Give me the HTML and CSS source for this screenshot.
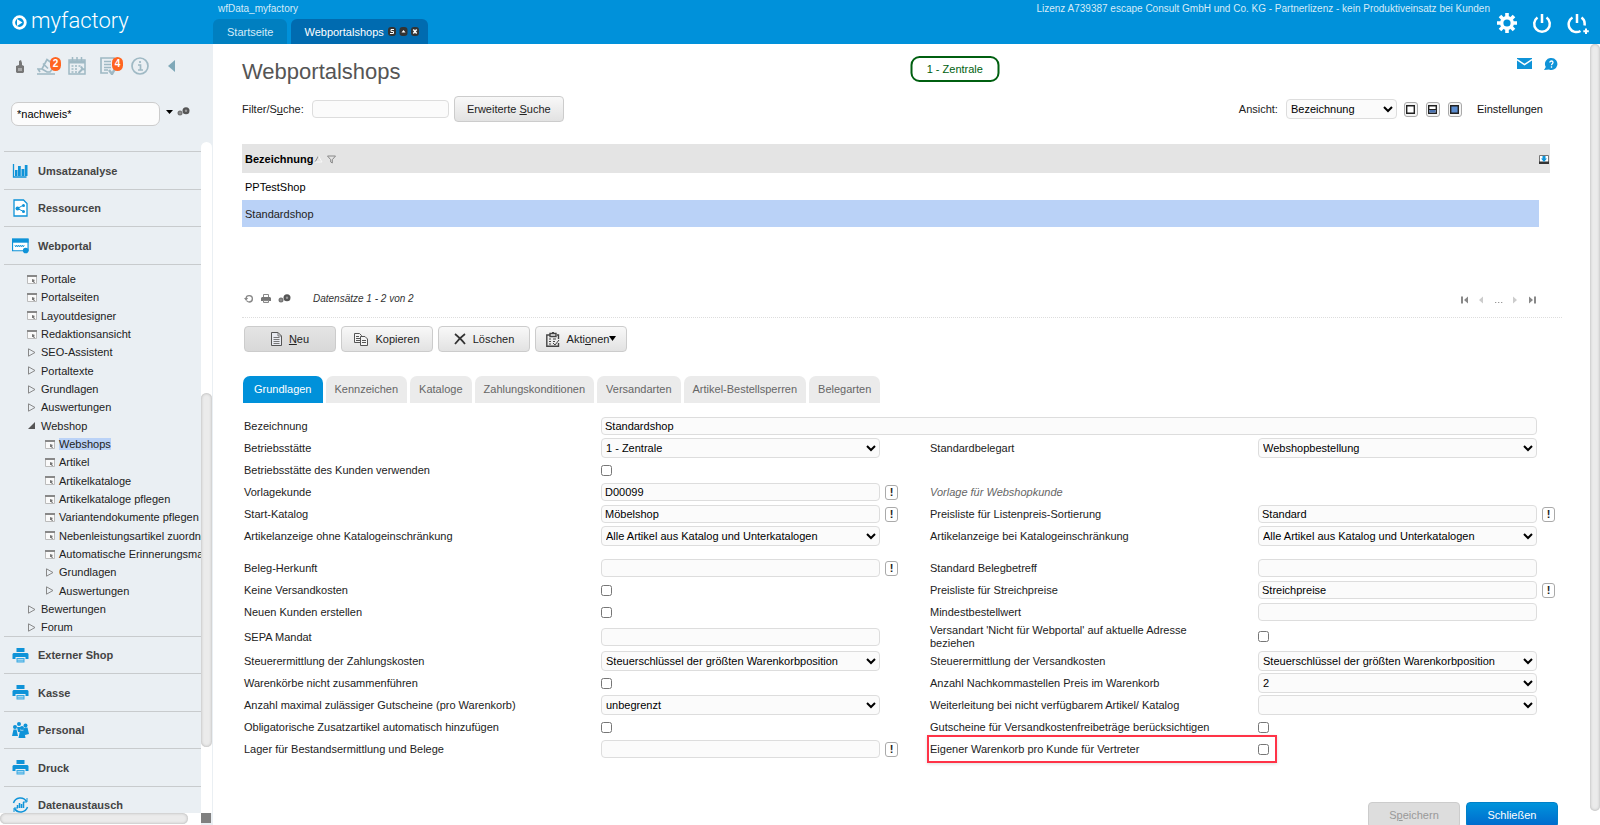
FILE: index.html
```html
<!DOCTYPE html>
<html lang="de">
<head>
	<meta charset="utf-8">
	<title>myfactory - Webportalshops</title>
	<link rel="stylesheet" href="styles.css">
</head>
<body>

<!-- icon symbols -->
<svg class="defs" width="0" height="0">
	<symbol id="page" viewBox="0 0 10 9"><path d="M.5 1.5h9v7h-9z" fill="#fafafa" stroke="#bbb"/><path d="M0 0h10v2H0z" fill="#888"/><path d="M5 4l3 1-1 1 1 2-1 0-1-1-1 0z" fill="#777"/></symbol>
	<symbol id="closed" viewBox="0 0 10 9"><path d="M1.500 .8v7.400L8 4.500z" fill="none" stroke="#888"/></symbol>
	<symbol id="opened" viewBox="0 0 10 9"><path d="M8 1v7H1z" fill="#555"/></symbol>
	<symbol id="printer" viewBox="0 0 16 15"><path d="M4 0h8v4H4zM1 5h14l1 1v5h-3V9H3v2H0V6z" fill="#0f93d8"/><path d="M4 10h8v4.500H4z" fill="#3aa9e2"/><path d="M5 11.500h6M5 13h6" stroke="#d5ecf8" stroke-width=".7"/></symbol>
	<symbol id="cogs" viewBox="0 0 13 9"><circle cx="3" cy="6" r="2.500" fill="#777"/><circle cx="9" cy="3.700" r="3.500" fill="#555"/><circle cx="3" cy="6" r=".8" fill="#aaa"/><circle cx="9" cy="3.700" r="1.200" fill="#999"/></symbol>
</svg>

<header class="top">
	<a class="logo" href="#">
		<svg width="15" height="15" viewBox="0 0 15 15"><circle cx="7.500" cy="7.500" r="5.800" fill="none" stroke="#fff" stroke-width="2.800"/><path d="M5 4v7l5.500-3.500z" fill="#fff"/></svg>
		<span>myfactory</span>
	</a>
	<div class="top-mid">
		<div class="database">wfData_myfactory</div>
		<nav class="top-tabs">
			<a href="#">Startseite</a>
			<a href="#" class="active">Webportalshops
				<svg width="31" height="9" viewBox="0 0 31 9"><rect width="8" height="9" rx="3" fill="#333"/><rect x="11.500" width="8" height="9" rx="3" fill="#333"/><rect x="23" width="8" height="9" rx="3" fill="#333"/><path d="M6 2.500H3v2h2.500v2H2" fill="none" stroke="#fff"/><path d="M13.500 5.500h4l-2-2.500z" fill="#fff"/><path d="M25.300 2.500l3.400 4m0-4l-3.400 4" stroke="#fff" stroke-width="1.500"/></svg>
			</a>
		</nav>
	</div>
	<div class="license">Lizenz A739387 escape Consult GmbH und Co. KG - Partnerlizenz - kein Produktiveinsatz bei Kunden</div>
	<div class="top-icons">
		<svg width="20" height="20" viewBox="0 0 20 20" fill="none" stroke="#fff"><circle cx="10" cy="10" r="5.300" stroke-width="3.400"/><path d="M10 0v4M10 16v4M0 10h4M16 10h4M3 3l2.700 2.700M14.300 14.300L17 17M17 3l-2.700 2.700M5.700 14.300L3 17" stroke-width="3.600"/></svg>
		<svg width="20" height="21" viewBox="0 0 20 21" fill="none" stroke="#fff" stroke-width="2.500"><path d="M5.500 4.500a7.800 7.800 0 1 0 9 0M10 1v9"/></svg>
		<svg width="22" height="21" viewBox="0 0 22 21" fill="none" stroke="#fff" stroke-width="2.500"><path d="M5.500 4.500a7.800 7.800 0 1 0 8 13.500M14.500 4.500c2.500 1.800 3.500 5 3 8M10 1v9"/><path d="M19 15.500v5.500M16.300 18.200h5.500" stroke-width="2"/></svg>
	</div>
</header>

<div class="page">
	<aside class="side">
		<div class="side-icons">
			<svg class="i1" width="10" height="13" viewBox="0 0 10 13"><path d="M1 6l3-1V1l2-1 1 3v2l2 1v6l-1 1H2l-1-1z" fill="#777"/><path d="M3 8h4v3H3z" fill="#aaa"/></svg>
			<svg class="i2" width="20" height="17" viewBox="0 0 20 17" fill="none" stroke="#9fb9c4" stroke-width="1.700"><path d="M0 16h18M3 14L1 11h4L10 1.500l8 6-5 6.500h-3L5 11M6 5.500l5 5"/></svg>
			<svg class="i3" width="18" height="18" viewBox="0 0 18 18" fill="none" stroke="#9fb9c4" stroke-width="1.500"><path d="M1 3h16v14H1zM4.500 0v4M9 0v4M13.500 0v4"/><path d="M1 5h16" stroke-width="3"/><path d="M3.500 9h2m1.500 0h2m1.500 0h2M3.500 12h2m1.500 0h2M3.500 15h2m1.500 0h2"/><path d="M10.500 16l4-4M13 9.500l1.500 2.500 2.500.5" stroke-width="2"/></svg>
			<svg class="i4" width="18" height="18" viewBox="0 0 18 18" fill="none" stroke="#9fb9c4" stroke-width="1.700"><path d="M8 16H1V1h13v9M4 4.500h7M4 7.500h7M4 10.500h7M4 13h4"/><path d="M9 13l3 4 4-7" stroke-width="2.500"/></svg>
			<svg class="i5" width="18" height="18" viewBox="0 0 18 18" fill="none" stroke="#9fb9c4" stroke-width="1.700"><circle cx="9" cy="9" r="8"/><path d="M7 8h2.500v5M7 13h5M9 4v2"/></svg>
			<svg class="i6" width="7" height="12" viewBox="0 0 7 12"><path d="M7 0v12L0 6z" fill="#7fa8b8"/></svg>
			<span class="badge b1">2</span>
			<span class="badge b2">4</span>
		</div>
		<div class="side-search">
			<input type="text" value="*nachweis*" aria-label="Suche">
			<svg width="7" height="4" viewBox="0 0 7 4"><path d="M0 0h7L3.500 4z"/></svg>
			<svg width="13" height="9"><use href="#cogs"/></svg>
		</div>
		<div class="side-body">
			<div class="side-scroll">
				<ul class="menu">
					<li><a class="section" href="#"><svg width="16" height="16" viewBox="0 0 16 16"><path d="M1 1v13h13" fill="none" stroke="#0f93d8" stroke-width="1.300"/><path d="M2.500 7h2.500v6H2.500zM5.500 3h2.800v10H5.500zM9 6h2.800v7H9zM12.300 2H15v11h-2.700z" fill="#0f93d8"/></svg>Umsatzanalyse</a></li>
					<li><a class="section" href="#"><svg width="16" height="18" viewBox="0 0 16 18"><path d="M1.500 1H11l3.500 3.500V17h-13z" fill="#fff" stroke="#0f93d8" stroke-width="1.300"/><path d="M11 6L5 9.500l6 3" fill="none" stroke="#0f93d8"/><circle cx="5" cy="9.500" r="2" fill="#0f93d8"/><circle cx="11" cy="6.500" r="1.500" fill="#0f93d8"/><circle cx="11" cy="12.500" r="1.500" fill="#0f93d8"/></svg>Ressourcen</a></li>
					<li><a class="section" href="#"><svg width="18" height="16" viewBox="0 0 18 16"><path d="M.6 1h16.400v12H.6z" fill="#fff" stroke="#0f93d8" stroke-width="1.200"/><path d="M0 0h17.500v4.500H0z" fill="#0f93d8"/><path d="M3 7l1 2 1-2 1 2 1-2 1 2 1-2 1 2 1-2 1 2 1-2" fill="none" stroke="#0f93d8" stroke-width=".9"/><circle cx="14.500" cy="12.800" r="3" fill="#0f93d8"/></svg>Webportal</a>
						<ul class="tree">
							<li><a href="#"><svg><use href="#page"/></svg>Portale</a></li>
							<li><a href="#"><svg><use href="#page"/></svg>Portalseiten</a></li>
							<li><a href="#"><svg><use href="#page"/></svg>Layoutdesigner</a></li>
							<li><a href="#"><svg><use href="#page"/></svg>Redaktionsansicht</a></li>
							<li><a href="#"><svg><use href="#closed"/></svg>SEO-Assistent</a></li>
							<li><a href="#"><svg><use href="#closed"/></svg>Portaltexte</a></li>
							<li><a href="#"><svg><use href="#closed"/></svg>Grundlagen</a></li>
							<li><a href="#"><svg><use href="#closed"/></svg>Auswertungen</a></li>
							<li><a href="#"><svg><use href="#opened"/></svg>Webshop</a>
								<ul>
									<li><a href="#"><svg><use href="#page"/></svg><span class="current">Webshops</span></a></li>
									<li><a href="#"><svg><use href="#page"/></svg>Artikel</a></li>
									<li><a href="#"><svg><use href="#page"/></svg>Artikelkataloge</a></li>
									<li><a href="#"><svg><use href="#page"/></svg>Artikelkataloge pflegen</a></li>
									<li><a href="#"><svg><use href="#page"/></svg>Variantendokumente pflegen</a></li>
									<li><a href="#"><svg><use href="#page"/></svg>Nebenleistungsartikel zuordnen</a></li>
									<li><a href="#"><svg><use href="#page"/></svg>Automatische Erinnerungsmails</a></li>
									<li><a href="#"><svg><use href="#closed"/></svg>Grundlagen</a></li>
									<li><a href="#"><svg><use href="#closed"/></svg>Auswertungen</a></li>
								</ul>
							</li>
							<li><a href="#"><svg><use href="#closed"/></svg>Bewertungen</a></li>
							<li><a href="#"><svg><use href="#closed"/></svg>Forum</a></li>
						</ul>
					</li>
					<li><a class="section" href="#"><svg width="16" height="15"><use href="#printer"/></svg>Externer Shop</a></li>
					<li><a class="section" href="#"><svg width="16" height="15"><use href="#printer"/></svg>Kasse</a></li>
					<li><a class="section" href="#"><svg width="17" height="16" viewBox="0 0 17 16" fill="#0f93d8"><circle cx="7" cy="2" r="2"/><circle cx="3" cy="5" r="2"/><circle cx="13.500" cy="3.500" r="2"/><circle cx="10" cy="6" r="2"/><path d="M5 5h4l-1 5H6zM0 14l1.500-6.500h3L6 14zM11 7l2-1.500h2.500L17 12l-4 1zM6.500 16l1.500-7.500h4l1.500 7.500z"/></svg>Personal</a></li>
					<li><a class="section" href="#"><svg width="16" height="15"><use href="#printer"/></svg>Druck</a></li>
					<li><a class="section" href="#"><svg width="16" height="16" viewBox="0 0 16 16" fill="none" stroke="#0f93d8"><path d="M1 6a7.200 7.200 0 0 1 13-1.500M15 10a7.200 7.200 0 0 1-13 1.500" stroke-width="1.500"/><path d="M14.500 1v4h-4M1.500 15v-4h4"/><path d="M5 11V8M7 11V6M9 11V7M11 11V5" stroke-width="1.500"/></svg>Datenaustausch</a></li>
				</ul>
			</div>
			<div class="vbar"><div class="thumb"></div></div>
			<div class="hbar"><div class="thumb"></div></div>
			<div class="corner"></div>
		</div>
	</aside>

	<main>
		<div class="title">
			<h1>Webportalshops</h1>
			<div class="location">1 - Zentrale</div>
			<div class="title-icons">
				<svg width="15" height="11" viewBox="0 0 15 11"><path d="M0 0h15v11H0z" fill="#0f93d8"/><path d="M0 1.500l7.500 5 7.500-5" fill="none" stroke="#fff" stroke-width="1.500"/></svg>
				<svg width="14" height="13" viewBox="0 0 14 13"><path d="M7.500 0a6 6 0 1 1-2.500 11.500L0 12l1.800-3A6 6 0 0 1 7.500 0z" fill="#0f93d8"/><path d="M5.800 4.500c0-2 3.200-2 3.200 0 0 1.300-1.500 1-1.500 2.700M7.500 8.300v1.500" fill="none" stroke="#fff" stroke-width="1.300"/></svg>
			</div>
		</div>

		<div class="filter">
			<label for="suche">Filter/S<u>u</u>che:</label>
			<input type="text" id="suche">
			<button type="button" class="btn"><span>Erweiterte <u>S</u>uche</span></button>
			<label class="view" for="ansicht">Ansicht:</label>
			<select id="ansicht"><option>Bezeichnung</option></select>
			<button type="button" class="mini" aria-label="Liste"><svg width="9" height="9" viewBox="0 0 9 9"><path d="M.7.7h7.600v7.600H.7z" fill="#fff" stroke="#222" stroke-width="1.400"/></svg></button>
			<button type="button" class="mini" aria-label="Geteilt"><svg width="9" height="9" viewBox="0 0 9 9"><path d="M.7.7h7.600v7.600H.7z" fill="#fff" stroke="#222" stroke-width="1.400"/><path d="M1.400 5h6.200v2.600H1.400z" fill="#4a72b0"/><path d="M1 4.500h7" stroke="#222"/></svg></button>
			<button type="button" class="mini" aria-label="Detail"><svg width="9" height="9" viewBox="0 0 9 9"><path d="M.7.7h7.600v7.600H.7z" fill="#5b8dd0" stroke="#222" stroke-width="1.400"/></svg></button>
			<a class="settings" href="#">Einstellungen</a>
		</div>

		<div class="list">
			<table>
				<thead>
					<tr>
						<th>Bezeichnung<svg width="24" height="9" viewBox="0 0 24 9" fill="none"><path d="M2 7l3.500-6" stroke="#888"/><path d="M5.500 1L9 7H2" stroke="#f8f8f8"/><path d="M14.500 1h8L19.300 4.700V8L17.700 7V4.700z" stroke="#888"/></svg></th>
						<th class="export"><svg width="10" height="9" viewBox="0 0 10 9"><path d="M.5.500h9v8h-9z" fill="#fff" stroke="#777"/><path d="M0 6.500h10V9H0z" fill="#333"/><path d="M3.500 1h3v2.500H8L5 7 2 3.500h1.500z" fill="#0f93d8"/></svg></th>
					</tr>
				</thead>
				<tbody>
					<tr><td>PPTestShop</td><td class="none"></td></tr>
					<tr class="selected"><td>Standardshop</td><td class="none"></td></tr>
				</tbody>
			</table>
		</div>

		<div class="list-foot">
			<svg width="10" height="9" viewBox="0 0 10 9"><path d="M2 4.500A3.200 3.200 0 1 1 5.200 8C4 8 3 7.300 2.500 6.500" fill="none" stroke="#888" stroke-width="1.300"/><path d="M0 4h4.200L2 6.800z" fill="#888"/></svg>
			<svg width="10" height="9" viewBox="0 0 10 9"><path d="M2.500.5h5v3h-5z" fill="#fff" stroke="#888"/><path d="M1 3h8l1 1v3H0V4z" fill="#777"/><path d="M2.500 6.500h5v2h-5z" fill="#eee" stroke="#888"/></svg>
			<svg width="13" height="9"><use href="#cogs"/></svg>
			<em>Datensätze 1 - 2 von 2</em>
			<svg class="pager" width="76" height="8" viewBox="0 0 76 8"><path d="M1 .5h2v7H1zM8 .5v7L4 4zM69 .5v7L73 4z M74 .5h2v7h-2z" fill="#888"/><path d="M23 .5v7L19 4zM53 .5v7L57 4z" fill="#ccc"/><path d="M35 6.500h1.300M38 6.500h1.300M41 6.500h1.300" stroke="#999"/></svg>
		</div>

		<div class="actions">
			<button type="button" class="btn pressed"><svg width="11" height="14" viewBox="0 0 11 14"><path d="M.5.5H7L10.500 4v9.500H.5z" fill="#e8eaf0" stroke="#555"/><path d="M7 .5V4h3.500M2.500 5.500h6M2.500 7.500h6M2.500 9.500h6M2.500 11.500h6" fill="none" stroke="#777"/></svg><span><u>N</u>eu</span></button>
			<button type="button" class="btn"><svg width="14" height="13" viewBox="0 0 14 13" fill="#f4f4f4" stroke="#555"><path d="M.5.5h5l2 2v7h-7zM2 3.500h3M2 5.500h4M2 7.500h4"/><path d="M6.500 3.500h4.500l2.500 2.500v6.500h-7zM8 7.500h4M8 9.500h4"/></svg><span>Kopieren</span></button>
			<button type="button" class="btn"><svg width="12" height="12" viewBox="0 0 12 12"><path d="M1 1c3 2.500 7 6 10 10M11 1C7 4 4 7 1 11" fill="none" stroke="#333" stroke-width="1.700"/></svg><span>Löschen</span></button>
			<button type="button" class="btn"><svg width="14" height="15" viewBox="0 0 14 15" fill="none" stroke="#444"><path d="M11 3h1.500v4M4 3H.8v11.200h11.700V11M4 1.500h6v3H4zM6 .5h2" stroke-width="1.400"/><path d="M3 7h2M3 9.500h2M3 12h2M7 7h3M7 9.500h2M7 11l2 2 4-5"/></svg><span>Akti<u>o</u>nen<svg class="caret" width="7" height="5" viewBox="0 0 7 5"><path d="M0 0h7L3.500 5z"/></svg></span></button>
		</div>

		<nav class="tabs">
			<a href="#" class="active">Grundlagen</a>
			<a href="#">Kennzeichen</a>
			<a href="#">Kataloge</a>
			<a href="#">Zahlungskonditionen</a>
			<a href="#">Versandarten</a>
			<a href="#">Artikel-Bestellsperren</a>
			<a href="#">Belegarten</a>
		</nav>

		<form>
			<div class="fields">
				<label for="f1">Bezeichnung</label>
				<input type="text" class="wide" id="f1" value="Standardshop">

				<label for="f2">Betriebsstätte</label>
				<select id="f2"><option>1 - Zentrale</option></select>
				<label class="right" for="f3">Standardbelegart</label>
				<select id="f3"><option>Webshopbestellung</option></select>

				<label for="f4">Betriebsstätte des Kunden verwenden</label>
				<input type="checkbox" id="f4">

				<label for="f5">Vorlagekunde</label>
				<input type="text" id="f5" value="D00099">
				<button type="button" class="pick">!</button>
				<em class="right">Vorlage für Webshopkunde</em>

				<label for="f6">Start-Katalog</label>
				<input type="text" id="f6" value="Möbelshop">
				<button type="button" class="pick">!</button>
				<label class="right" for="f7">Preisliste für Listenpreis-Sortierung</label>
				<input type="text" id="f7" value="Standard">
				<button type="button" class="pick">!</button>

				<label for="f8">Artikelanzeige ohne Katalogeinschränkung</label>
				<select id="f8"><option>Alle Artikel aus Katalog und Unterkatalogen</option></select>
				<label class="right" for="f9">Artikelanzeige bei Katalogeinschränkung</label>
				<select id="f9"><option>Alle Artikel aus Katalog und Unterkatalogen</option></select>
			</div>

			<div class="fields">
				<label for="f10">Beleg-Herkunft</label>
				<input type="text" id="f10">
				<button type="button" class="pick">!</button>
				<label class="right" for="f11">Standard Belegbetreff</label>
				<input type="text" id="f11">

				<label for="f12">Keine Versandkosten</label>
				<input type="checkbox" id="f12">
				<label class="right" for="f13">Preisliste für Streichpreise</label>
				<input type="text" id="f13" value="Streichpreise">
				<button type="button" class="pick">!</button>

				<label for="f14">Neuen Kunden erstellen</label>
				<input type="checkbox" id="f14">
				<label class="right" for="f15">Mindestbestellwert</label>
				<input type="text" id="f15">

				<label for="f16">SEPA Mandat</label>
				<input type="text" id="f16">
				<label class="right two" for="f17">Versandart 'Nicht für Webportal' auf aktuelle Adresse beziehen</label>
				<input type="checkbox" id="f17">

				<label for="f18">Steuerermittlung der Zahlungskosten</label>
				<select id="f18"><option>Steuerschlüssel der größten Warenkorbposition</option></select>
				<label class="right" for="f19">Steuerermittlung der Versandkosten</label>
				<select id="f19"><option>Steuerschlüssel der größten Warenkorbposition</option></select>

				<label for="f20">Warenkörbe nicht zusammenführen</label>
				<input type="checkbox" id="f20">
				<label class="right" for="f21">Anzahl Nachkommastellen Preis im Warenkorb</label>
				<select id="f21"><option>2</option></select>

				<label for="f22">Anzahl maximal zulässiger Gutscheine (pro Warenkorb)</label>
				<select id="f22"><option>unbegrenzt</option></select>
				<label class="right" for="f23">Weiterleitung bei nicht verfügbarem Artikel/ Katalog</label>
				<select id="f23"><option></option></select>

				<label for="f24">Obligatorische Zusatzartikel automatisch hinzufügen</label>
				<input type="checkbox" id="f24">
				<label class="right" for="f25">Gutscheine für Versandkostenfreibeträge berücksichtigen</label>
				<input type="checkbox" id="f25">

				<label for="f26">Lager für Bestandsermittlung und Belege</label>
				<input type="text" id="f26">
				<button type="button" class="pick">!</button>
				<label class="right marked" for="f27">Eigener Warenkorb pro Kunde für Vertreter</label>
				<input type="checkbox" id="f27">
			</div>
		</form>

		<div class="bottom">
			<button type="button" class="btn" disabled><span>S<u>p</u>eichern</span></button>
			<button type="button" class="btn primary">Schließen</button>
		</div>
	</main>

	<div class="page-bar"><div class="thumb"></div></div>
</div>

</body>
</html>
```

FILE: styles.css
```css
* { box-sizing: border-box; }
html, body { height: 100%; margin: 0; padding: 0; }
body, input, select, button { font-family: "Liberation Sans", Arial, sans-serif; font-size: 11px; color: #222; }
body { display: flex; flex-direction: column; overflow: hidden; background-color: #fff; }
a { color: inherit; text-decoration: none; }
ul { list-style: none outside; margin: 0; padding: 0; }
svg { flex: none; }
.defs { position: absolute; }

/* header */
.top { flex: none; display: flex; height: 44px; background-color: #0091da; color: #fff; }
.logo { display: flex; align-items: center; width: 213px; padding: 0 0 3px 12px; gap: 4px; font-family: Roboto, sans-serif; font-size: 22px; font-weight: 300; }
.logo svg { margin-top: 3px; }
.top-mid { flex: 1; }
.database { height: 19px; padding-left: 5px; font-size: 10px; line-height: 17px; color: #d5ebf8; }
.top-tabs { display: flex; gap: 4px; }
.top-tabs a { display: flex; align-items: center; gap: 4px; height: 25px; padding: 0 14px; border-radius: 6px 6px 0 0; background-color: #007fc0; color: #d5ebf8; }
.top-tabs .active { padding: 0 9px 0 13px; background-color: #006bb0; color: #fff; }
.license { font-size: 10px; line-height: 17px; color: #d5ebf8; }
.top-icons { display: flex; align-items: center; gap: 15px; padding: 2px 11px 0 7px; }

.page { flex: 1; display: flex; min-height: 0; }

/* sidebar */
.side { flex: none; display: flex; flex-direction: column; width: 213px; background-color: #eaeff3; }
.side-icons { position: relative; display: flex; align-items: center; height: 44px; padding-left: 15px; }
.i2 { margin-left: 12px; }
.i3 { margin-left: 11px; }
.i4 { margin-left: 14px; }
.i5 { margin-left: 13px; }
.i6 { margin-left: 19px; }
.badge { position: absolute; top: 13px; width: 11px; height: 14px; border-radius: 6px; background-color: #ff6420; color: #fff; font-size: 10px; font-weight: bold; line-height: 14px; text-align: center; }
.b1 { left: 50px; }
.b2 { left: 112px; }
.side-search { display: flex; align-items: flex-start; padding: 14px 0 16px 11px; }
.side-search input { width: 149px; height: 24px; padding: 0 5px; border: 1px solid #ccc; border-radius: 7px; background-color: #fcfcfc; }
.side-search svg { margin: 8px 0 0 6px; }
.side-search svg + svg { margin: 5px 0 0 4px; }

.side-body { flex: 1; display: grid; grid-template: minmax(0, 1fr) 12px / 201px 12px; min-height: 0; }
.side-scroll { overflow: hidden; padding: 9px 0 0 4px; }
.section { display: flex; align-items: center; gap: 9px; height: 38px; padding: 0 0 0 8px; border-top: 1px solid #c8cbcd; font-weight: bold; color: #444; }
.menu > li:nth-child(even) > .section { height: 37px; }
.section svg { width: 17px; }
.tree { padding: 5px 0 0 23px; border-top: 1px solid #c8cbcd; }
.tree ul { padding-left: 18px; }
.tree a { display: flex; align-items: center; gap: 4px; height: 18px; white-space: nowrap; }
.tree li:nth-child(3n) > a { height: 19px; }
.tree svg { width: 10px; height: 9px; }
.current { background-color: #bad2f7; }

.vbar { margin-right: 1px; padding: 251px 0 66px; border-radius: 6px 6px 0 0; background-color: #fff; }
.vbar .thumb { height: 100%; }
.hbar { padding-right: 13px; background-color: #fff; }
.hbar .thumb { height: 11px; }
.thumb { border-radius: 6px; background-color: #ebebeb; box-shadow: inset 0 0 3px #aaa; }
.corner { width: 10px; height: 10px; background-color: #808080; }
.page-bar { flex: none; width: 10px; padding-bottom: 14px; }
.page-bar .thumb { height: 100%; }

/* content */
main { flex: 1; min-width: 0; padding: 0 28px 0 29px; }
input, select { height: 18px; margin: 0; padding: 0 3px; border: 1px solid #ddd; border-radius: 4px; background-color: #fbfbfb; color: #000; }
select { height: 20px; padding: 0; }
input[type=checkbox] { width: 11px; height: 11px; padding: 0; }
.btn { display: flex; align-items: center; justify-content: center; gap: 7px; height: 26px; padding: 0; border: 1px solid #ccc; border-radius: 4px; background: linear-gradient(#f8f8f8, #e2e2e2); }

.title { position: relative; display: flex; justify-content: space-between; height: 52px; padding-top: 13px; }
h1 { margin: 0; font-size: 22px; font-weight: normal; line-height: 30px; color: #555; }
.location { position: absolute; top: 12px; left: 54%; width: 89px; height: 26px; transform: translateX(-50%); border: 2px solid #005f10; border-radius: 9px; line-height: 23px; text-align: center; color: #005f10; }
.title-icons { display: flex; gap: 12px; padding: 1px 4px 0 0; }

.filter { display: flex; align-items: center; height: 26px; }
.filter > input { width: 137px; margin: 0 5px 0 8px; }
.filter .btn { width: 110px; }
.filter .view { margin-left: auto; }
.filter select { width: 111px; margin: 0 7px 0 8px; }
.mini { display: flex; align-items: center; justify-content: center; width: 14px; height: 15px; margin-right: 8px; padding: 0; border: 1px solid #aaa; border-radius: 3px; background-color: #f4f4f4; }
.settings { margin: 0 19px 0 7px; color: #111; }

.list { height: 140px; margin: 22px 12px 0 0; }
.list table { width: 100%; border-collapse: collapse; }
.list th { height: 29px; padding: 0 3px; background-color: #e4e4e4; text-align: left; color: #000; }
.list th svg { vertical-align: -1px; }
.list .export { width: 11px; padding: 0 1px 0 0; text-align: right; }
.list td { height: 27px; padding: 0 3px; color: #000; }
.list .selected td { background-color: #bad2f7; color: #222; }
.list td.none, .list .selected .none { padding: 0; background: none; }

.list-foot { display: flex; align-items: center; gap: 7px; height: 34px; padding: 0 0 4px 2px; border-bottom: 1px dotted #ddd; }
.list-foot em { margin-left: 15px; font-size: 10px; color: #333; }
.pager { margin: 2px 26px 0 auto; }

.actions { display: flex; gap: 5px; padding: 8px 0 0 2px; }
.actions .btn { width: 92px; }
.actions .pressed { background: linear-gradient(#e4e4e4, #d8d8d8); }
.caret { vertical-align: 2px; }

.tabs { display: flex; gap: 3px; padding: 24px 0 12px 1px; }
.tabs a { height: 27px; padding: 0 9px; border-radius: 7px 7px 0 0; background-color: #ebebeb; line-height: 27px; color: #666; }
.tabs .active { padding: 0 11px; background-color: #0091da; color: #fff; }

.fields { display: grid; grid-template-columns: 357fr 279fr 50fr 328fr 279fr 18px; grid-auto-rows: minmax(22px, auto); align-items: center; padding: 0 7px 0 2px; }
.fields + .fields { margin-top: 10px; }
.fields label { grid-column: 1; }
.fields > .right { grid-column: 4; }
.fields em { color: #666; }
.fields .wide { grid-column: 2 / 6; }
.fields .two { padding: 1px 60px 0 0; line-height: 13px; }
.pick { width: 13px; height: 15px; margin-left: 5px; padding: 0; border: 1px solid #aaa; border-radius: 3px; background-color: #fff; font-weight: bold; line-height: 12px; }
.marked { position: relative; }
.marked::after { content: ""; position: absolute; top: -8px; right: -19px; bottom: -8px; left: -3px; border: 2px solid #ff3347; box-shadow: 0 1px 3px #ddd; }

.bottom { display: flex; justify-content: flex-end; gap: 6px; padding: 42px 4px 0 0; }
.bottom .btn { width: 92px; }
.bottom .btn:disabled { background: #ddd; color: #999; }
.bottom .primary { border-color: #0080c8; background: linear-gradient(#0094dc, #0068cc); color: #fff; }
```
